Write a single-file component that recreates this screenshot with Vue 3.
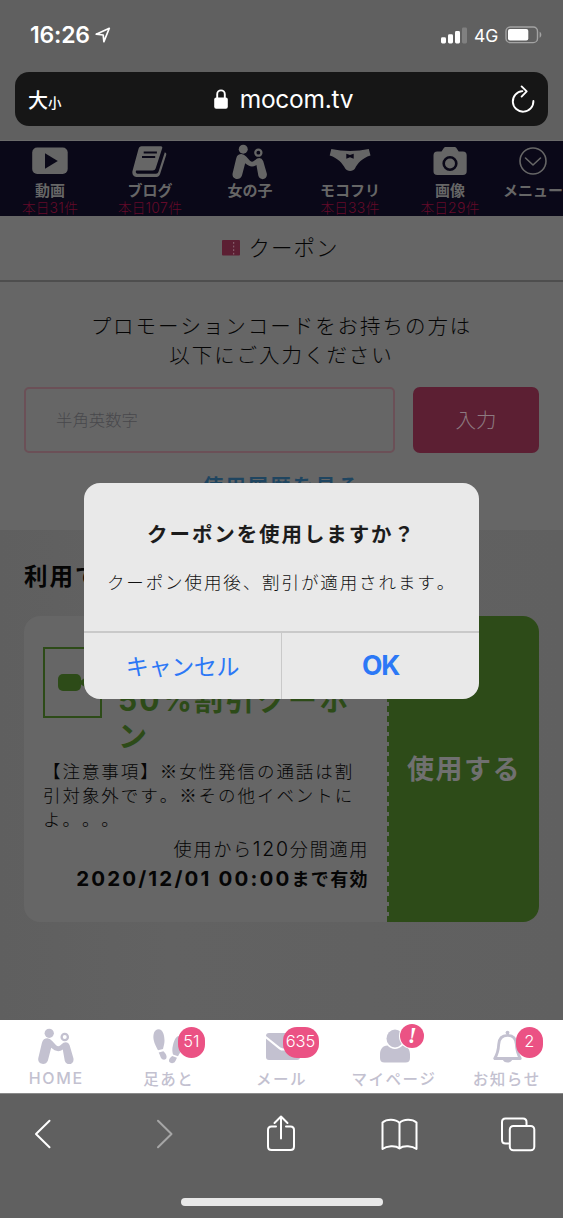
<script setup>
const tabs = [
  { icon: 'video', label: '動画', count: ['本日', '31', '件'] },
  { icon: 'book', label: 'ブログ', count: ['本日', '107', '件'] },
  { icon: 'people', label: '女の子', count: [] },
  { icon: 'pants', label: 'モコフリ', count: ['本日', '33', '件'] },
  { icon: 'camera', label: '画像', count: ['本日', '29', '件'] },
  { icon: 'more', label: 'メニュー', count: [] },
]
const footer = [
  { icon: 'people', label: 'HOME', badge: '' },
  { icon: 'steps', label: '足あと', badge: '51' },
  { icon: 'mail', label: 'メール', badge: '635' },
  { icon: 'user', label: 'マイページ', badge: '!' },
  { icon: 'bell', label: 'お知らせ', badge: '2' },
]
</script>

<template>
  <div class="phone">
    <div class="status">
      <span class="time">16:26</span>
      <svg class="loc" width="16" height="16" viewBox="0 0 16 16"><path d="M1.2 7.2 14.3 1.3 8.9 14.6 8.2 8z" fill="none" stroke="#fff" stroke-width="1.7" stroke-linejoin="round" /></svg>
      <svg class="signal" width="27" height="17" viewBox="0 0 27 17" fill="#fff"><rect x="0" y="10.3" width="5" height="6.2" rx="1.4" /><rect x="7" y="7.2" width="5" height="9.3" rx="1.4" /><rect x="14" y="4" width="5" height="12.5" rx="1.4" /><rect x="21" y="0.5" width="5" height="16" rx="1.4" fill="#808080" /></svg>
      <span class="net">4G</span>
      <svg class="battery" width="37" height="18" viewBox="0 0 37 18"><rect x="1" y="1" width="31.5" height="15.6" rx="4.2" fill="none" stroke="#a3a3a3" stroke-width="1.4" /><rect x="3" y="3" width="20.3" height="11.6" rx="2" fill="#fff" /><path d="M34.6 5.8c2.3 1.2 2.3 4.8 0 6z" fill="#a3a3a3" /></svg>
    </div>

    <div class="url">
      <span class="size"><b>大</b><i>小</i></span>
      <span class="host">
        <svg width="14" height="20" viewBox="0 0 14 20"><path d="M3.2 9V5.2a3.8 3.8 0 0 1 7.6 0V9" fill="none" stroke="#fff" stroke-width="1.9" /><rect x="0.2" y="8.4" width="13.6" height="11.4" rx="2" fill="#fff" /></svg>
        mocom.tv
      </span>
      <svg class="reload" width="26" height="30" viewBox="0 0 26 30"><path d="M12.4 6.1A10.3 10.3 0 1 0 23.4 16M11.6 1.4 16.7 6.4 11.6 11.6" fill="none" stroke="#fff" stroke-width="1.9" stroke-linecap="round" stroke-linejoin="round" /></svg>
    </div>

    <nav class="tabs">
      <div v-for="t in tabs" :key="t.label" class="tab" :class="t.icon">
        <svg v-if="t.icon === 'video'" width="44" height="36" viewBox="0 0 44 36"><rect x="4.2" y="6.5" width="35.5" height="26.5" rx="5" /><path d="M17 12.2v15.6L29.8 20z" fill="#0a0818" /></svg>
        <svg v-else-if="t.icon === 'book'" width="44" height="36" viewBox="0 0 44 36"><path d="M13.6 5.2h19c1.3 0 2 .9 1.6 2.1l-6.5 20c-.5 1.5-1.5 2.2-3.1 2.2H9c-2 0-1.3 3.2.5 3.2h18.5c1.2 0 2.1-.6 2.5-1.9l6.3-19.5c1.6.7 1.7 1.7 1.3 3l-6 18.8c-.6 1.9-2 3-4 3H9.3c-3.6 0-5.9-3-4.6-6.8L10.5 8c.6-1.8 1.4-2.8 3.1-2.8z" /><path d="M15.7 11.5h13.2M14 16h13.2" stroke="#0a0818" stroke-width="2" /></svg>
        <svg v-else-if="t.icon === 'people'" width="36" height="36" viewBox="116 55 112 110"><circle cx="151" cy="70" r="14" /><circle cx="198" cy="81" r="9.5" fill="none" stroke="currentColor" stroke-width="7" /><path d="M135 88Q149 80 160 93L172 106Q178 112 184 107L194 99Q207 93 213 107L224 145C229 165 203 170 198 153L192 119C180 128 168 124 157 114L147 152C141 170 114 164 118 145L129 99Q131 91 135 88z" /></svg>
        <svg v-else-if="t.icon === 'pants'" width="44" height="36" viewBox="0 0 44 36"><path d="M3.3 8c12 2.5 25.5 2.5 37.5 0l1.7 6.500C34 17 29.5 22.5 27 27.5c-1.7 3.2-8 3.2-9.8 0C14.500 22.5 10 17 1.7 14.5z" /><path d="m18.3 12.7 3.7 1.3 3.7-1.3v5L22 16.3l-3.7 1.4z" fill="#0a0818" /></svg>
        <svg v-else-if="t.icon === 'camera'" width="44" height="36" viewBox="0 0 44 36"><path d="M13.5 10.5 16 6.7c.3-.5.8-.7 1.5-.7h9.2c.7 0 1.2.2 1.5.7l2.5 3.8h4.2q3.8 0 3.8 3.8v15.9q0 3.8-3.8 3.8H9.3q-3.8 0-3.8-3.8V14.3q0-3.8 3.8-3.8z" /><circle cx="22" cy="22.5" r="6.3" fill="none" stroke="#0a0818" stroke-width="2.6" /></svg>
        <svg v-else width="44" height="36" viewBox="0 0 44 36"><g fill="none" stroke="currentColor" stroke-width="1.6" stroke-linecap="round" stroke-linejoin="round"><circle cx="22" cy="20" r="13" /><path d="m14.5 17 7.5 7 7.5-7" /></g></svg>
        <span class="tab-label">{{ t.label }}</span>
        <span v-if="t.count.length" class="tab-count">{{ t.count[0] }}<span>{{ t.count[1] }}</span>{{ t.count[2] }}</span>
      </div>
    </nav>

    <header class="title">
      <svg width="18" height="16" viewBox="0 0 18 16"><rect width="18" height="15.5" rx="1" fill="#5c1f33" /><path d="M11.7 2v12.5" stroke="#8d6b76" stroke-width="1" stroke-dasharray="1.8 1.8" /></svg>
      <span>クーポン</span>
    </header>

    <section class="form">
      <p class="lead">プロモーションコードをお持ちの方は<br />以下にご入力ください</p>
      <div class="row">
        <div class="field">半角英数字</div>
        <div class="submit">入力</div>
      </div>
      <div class="history">使用履歴を見る</div>
    </section>

    <section class="list">
      <h2>利用できるクーポン</h2>
      <div class="card">
        <div class="info">
          <div class="head">
            <div class="cam"><svg width="36" height="20" viewBox="0 0 36 20"><rect x="0" y="1" width="23" height="17" rx="5" fill="#2d4b18" /><path d="M22 9.5 31 3v13z" fill="#2d4b18" stroke="#2d4b18" stroke-width="2" stroke-linejoin="round" /></svg></div>
            <div class="name"><span class="pct">50%</span>割引クーポ<br />ン</div>
          </div>
          <p class="note">【注意事項】※女性発信の通話は割<br />引対象外です。※その他イベントに<br />よ。。。</p>
          <p class="span">使用から<span>120</span>分間適用</p>
          <p class="until"><span>2020/12/01 00:00</span>まで有効</p>
        </div>
        <div class="use">使用する</div>
      </div>
    </section>

    <nav class="foot">
      <div v-for="f in footer" :key="f.label" class="item" :class="f.icon">
        <div class="pic">
          <svg v-if="f.icon === 'people'" width="37" height="37" viewBox="114 55 112 110"><circle cx="151" cy="70" r="14" /><circle cx="198" cy="81" r="9.5" fill="none" stroke="currentColor" stroke-width="7" /><path d="M135 88Q149 80 160 93L172 106Q178 112 184 107L194 99Q207 93 213 107L224 145C229 165 203 170 198 153L192 119C180 128 168 124 157 114L147 152C141 170 114 164 118 145L129 99Q131 91 135 88z" /></svg>
          <svg v-else-if="f.icon === 'steps'" width="37" height="37" viewBox="0 0 37 37"><path d="M8.5 1.2c4.5 0 6 6 6 11.5 0 3-.8 5-1.5 8.3l-5 1.2C6.5 19 4.5 16.5 3.7 12 2.7 6.5 4.3 1.2 8.5 1.2zM8.7 24.5l4.7-1.3c2.500 2 3.8 5 3 7-.7 2-4.3 2-5.5-.5-.7-1.500-1.100-3.2-2.2-5.2zM29 8c3.5 0 4.5 5.5 3.5 11-.7 4-3 6-4.5 9.2l-5-1.7c-.8-3-1-5.5 0-9.5C24 12.5 26 8 29 8zM22.3 28l4.7 1.7c-1 2-1.3 3-2.2 4.3-1.6 2-5.5 1.2-5.8-1-.2-2 1.5-4 3.3-5z" /></svg>
          <svg v-else-if="f.icon === 'mail'" width="37" height="37" viewBox="0 0 37 37"><rect x="3" y="5" width="34" height="27" rx="3" /><path d="M2 8.5 17 20.5q3 2 6 0L38 8.5" fill="none" stroke="#fff" stroke-width="2.2" /></svg>
          <svg v-else-if="f.icon === 'user'" width="37" height="37" viewBox="0 0 37 37"><ellipse cx="20" cy="10.5" rx="8.5" ry="9" /><path d="M12.5 17.5c4 4.5 11 4.5 15 0 5 0 7.5 4 7.5 9V30q0 4.5-4.5 4.5h-21Q5 34.5 5 30v-3.500c0-5 2.5-9 7.5-9z" /></svg>
          <svg v-else width="37" height="37" viewBox="0 0 37 37"><path d="M19.5 7.3c-6 0-8.5 4-8.8 9-.3 6.2-1.5 10-4 14.2H32.300c-2.5-4.2-3.7-8-4-14.200-.3-5-2.8-9-8.8-9z" fill="none" stroke="currentColor" stroke-width="2.8" stroke-linejoin="round" /><circle cx="19.5" cy="4.6" r="1.9" /><path d="M14.700 31h9.6c-.5 4.8-9.1 4.8-9.6 0z" /></svg>
          <span v-if="f.badge" class="badge" :class="{ wide: f.badge.length > 2, bang: f.badge === '!' }">{{ f.badge }}</span>
        </div>
        <span class="foot-label">{{ f.label }}</span>
      </div>
    </nav>

    <div class="toolbar">
      <svg viewBox="0 0 40 40"><path d="M21.5 6.8 8 20l13.5 13.2" /></svg>
      <svg class="off" viewBox="0 0 40 40"><path d="m12 6.8 13.5 13.2L12 33.2" /></svg>
      <svg viewBox="0 0 40 40"><path d="M13 12.5H8.500q-3.5 0-3.5 3.5v16.500Q5 36 8.5 36h19q3.5 0 3.5-3.5V16q0-3.5-3.5-3.5H23M18 24.5V3M11.5 9 18 2.5 24.5 9" /></svg>
      <svg viewBox="0 0 40 40"><path d="M18.5 34.5V9C14.5 4.700 5.5 5 1.5 8.5v26.5c4-3 13-4 17-.5 4-3.5 13-2.5 17 .5V8.500c-4-3.5-13-3.8-17 .5" /></svg>
      <svg viewBox="0 0 40 40"><path d="M10.5 29.5H7.5q-3.5 0-3.5-3.5V8q0-3.5 3.5-3.5H25q3.5 0 3.5 3.5v4" /><rect x="11.8" y="12" width="24.5" height="24.3" rx="3.5" /></svg>
    </div>
    <div class="home"></div>

    <div class="dialog">
      <div class="msg">
        <strong>クーポンを使用しますか？</strong>
        <p>クーポン使用後、割引が適用されます。</p>
      </div>
      <div class="actions">
        <span class="cancel">キャンセル</span>
        <span class="ok">OK</span>
      </div>
    </div>
  </div>
</template>

<style>
body { margin: 0; background: #606060; }
</style>

<style scoped>
* { box-sizing: border-box; }
p, h2 { margin: 0; }
.phone { position: relative; display: flex; flex-direction: column; width: 563px; height: 1218px; overflow: hidden; background: #606060; color: #050505; font-family: "Noto Sans CJK JP", sans-serif; white-space: nowrap; text-spacing-trim: space-all; font-kerning: none; }
svg { display: block; flex: none; }
.status { flex: none; display: flex; align-items: center; height: 72px; padding: 0 21px 2px 30px; color: #fff; font-family: Inter, sans-serif; }
.time { font-size: 23px; font-weight: 600; letter-spacing: -0.2px; width: 65px; }
.signal { margin-left: auto; }
.net { margin: 1px 6px 0 6px; font-size: 17.5px; width: 25px; }
.url { flex: none; display: flex; align-items: center; justify-content: space-between; height: 54px; margin: 0 15px; padding: 0 12px 0 13px; border-radius: 14px; background: #161616; color: #fff; }
.size { width: 37px; display: flex; align-items: baseline; line-height: 24px; padding-top: 3px; }
.size b { font-size: 20px; font-weight: 500; }
.size i { font-size: 13.5px; font-style: normal; font-weight: 500; }
.host { display: flex; align-items: center; gap: 12px; margin-right: 8px; font: 400 24.5px/30px Inter, sans-serif; letter-spacing: -0.25px; }
.reload { margin-top: 1px; }
.tabs { flex: none; display: flex; height: 76px; margin-top: 14px; border-top: 1px solid #6b6b6b; background: #0a0818; color: #666; fill: #666; overflow: hidden; }
.tab { flex: none; display: flex; flex-direction: column; align-items: center; width: 100px; }
.tab.more { width: 66px; }
.tab svg { height: 38px; padding-bottom: 2px; }
.tab.people svg { height: 36px; padding: 0; margin: 3px 0 -1px; }
.tab-label { font-size: 15px; font-weight: 700; line-height: 21px; }
.tab-count { font-size: 13.7px; font-weight: 300; line-height: 15px; color: #650a2a; }
.tab-count span { font: 300 14px/14px Inter, sans-serif; letter-spacing: 0.4px; }
.title { flex: none; display: flex; align-items: center; justify-content: center; gap: 8px; height: 66px; padding-right: 2px; border-bottom: 2px solid #4e4e4e; background: #666; font-size: 21.5px; font-weight: 300; line-height: 30px; letter-spacing: 1px; }
.title span { margin-top: -2px; }
.form { flex: none; height: 248px; padding: 29px 24px 0; background: #666; }
.lead { text-align: center; font-size: 20.5px; font-weight: 300; line-height: 28.5px; letter-spacing: 1.95px; }
.row { display: flex; gap: 18px; margin-top: 19px; }
.field { flex: 1; height: 66px; padding-left: 30px; border: 2px solid #6b5057; border-radius: 5px; font-size: 16.4px; font-weight: 300; line-height: 61px; color: #48484c; }
.submit { width: 126px; height: 66px; border-radius: 7px; background: #5c1f33; color: #8d7a80; font-size: 20.5px; font-weight: 300; line-height: 64px; text-align: center; }
.history { margin-top: 16px; text-align: center; font-size: 20.5px; font-weight: 700; line-height: 32px; letter-spacing: 2px; color: #1f4560; }
.list { flex: none; height: 490px; padding: 27px 24px 0; background: linear-gradient(90deg, #5f5f5f, #626262 30%, #606060); }
h2 { font-size: 23.5px; font-weight: 700; line-height: 36px; letter-spacing: 2px; }
.card { display: flex; height: 306px; margin-top: 23px; border-radius: 16px; background: #666; overflow: hidden; }
.info { width: 365px; padding: 31px 18px 0 19px; border-right: 2px dashed #2d4b18; }
.head { display: flex; gap: 16px; height: 112px; }
.cam { flex: none; display: flex; align-items: center; width: 59px; height: 71px; padding-left: 13px; border: 2px solid #2d4b18; }
.name { margin-top: 33px; font-size: 29px; font-weight: 700; line-height: 36px; letter-spacing: 2.4px; color: #2d4b18; }
.pct { font: 700 30px/30px Inter, sans-serif; letter-spacing: 2px; }
.note { font-size: 17.5px; font-weight: 300; line-height: 24px; letter-spacing: 1.95px; }
.span { margin-top: 2px; text-align: right; font-size: 18.2px; font-weight: 300; line-height: 30px; letter-spacing: 1.6px; }
.span span { font: 300 19.5px/19px Inter, sans-serif; letter-spacing: 1.8px; }
.until { text-align: right; font-size: 18px; font-weight: 700; line-height: 30px; letter-spacing: 1.4px; }
.until span { font: 700 20.5px/20px Inter, sans-serif; letter-spacing: 2.15px; }
.use { flex: 1; background: #2d4b18; color: #707070; font-size: 27px; font-weight: 700; line-height: 304px; letter-spacing: 1.5px; text-align: center; }
.foot { flex: none; display: flex; justify-content: space-between; height: 73px; background: #fff; color: #c3c1d0; fill: #c3c1d0; }
.item { display: flex; flex-direction: column; align-items: center; width: 112.5px; padding-top: 8px; }
.pic { position: relative; width: 37px; height: 37px; left: -0.5px; }
.foot-label { margin-top: 2px; font-size: 15.5px; font-weight: 500; line-height: 22px; letter-spacing: 1.5px; }
.people .foot-label { font-family: Inter, sans-serif; font-size: 16px; letter-spacing: 1.7px; }
.badge { position: absolute; left: 28px; top: -1px; width: 27px; height: 31px; border-radius: 14px; background: #eb5284; color: #fff; font: 300 16.5px/29px Inter, sans-serif; text-align: center; }
.badge.wide { left: 20px; width: 36px; }
.badge.bang { left: 25px; top: -4px; width: 24px; height: 24px; border-radius: 12px; font: italic 700 23px/24px "Liberation Serif", serif; box-shadow: 0 0 0 1px #fff; }
.toolbar { flex: none; display: flex; justify-content: space-between; height: 89px; padding: 20px 25px 0 28px; border-top: 1px solid #8a8a8a; }
.toolbar svg { width: 40px; height: 40px; fill: none; stroke: #fff; stroke-width: 2; stroke-linecap: round; stroke-linejoin: round; }
.toolbar svg.off { stroke: #a6a6a6; }
.home { flex: none; width: 202px; height: 8px; margin: 16px 0 0 181px; border-radius: 4px; background: #e8e8e8; }
.dialog { position: absolute; left: 84px; top: 483px; display: flex; flex-direction: column; width: 395px; height: 216px; border-radius: 16px; background: #e9e9e9; overflow: hidden; text-align: center; }
.msg { height: 150px; padding-top: 33px; border-bottom: 2px solid #c9c9c9; }
.msg strong { display: block; font-size: 20.5px; line-height: 34px; letter-spacing: 1.9px; color: #1c1c1c; }
.msg p { margin-top: 15px; font-size: 17.5px; font-weight: 300; line-height: 34px; letter-spacing: 1.9px; color: #111; }
.actions { flex: 1; display: flex; color: #2c78f6; }
.actions span { flex: 1; line-height: 65px; }
.cancel { border-right: 1px solid #c9c9c9; font-size: 23px; font-weight: 400; letter-spacing: -0.3px; }
.ok { font-family: Inter, sans-serif; font-size: 26.5px; font-weight: 700; letter-spacing: -1.2px; }
</style>
